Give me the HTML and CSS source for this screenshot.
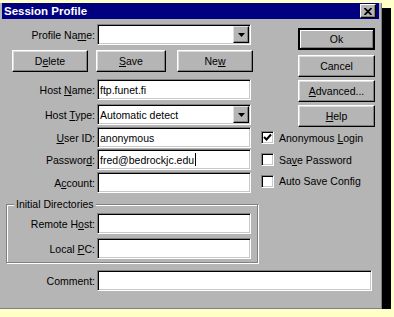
FILE: index.html
```html
<!DOCTYPE html>
<html lang="en">
<head>
  <meta charset="UTF-8" />
  <title>Session Profile</title>
  <link rel="stylesheet" href="styles.css">
</head>
<body>
  <div class="window">
    <div class="titlebar">
      <span class="title">Session Profile</span>
      <span class="close">
        <svg width="8" height="7" viewBox="0 0 8 7"><path d="M0.5 0 L7.5 7 M7.5 0 L0.5 7" stroke="#000" stroke-width="1.8"/></svg>
      </span>
    </div>

    <div class="top">
      <div class="top-left">
        <div class="row row-profile">
          <span class="lbl">Profile Na<u>m</u>e:</span>
          <div class="field">
            <span class="drop"><svg width="7" height="4" viewBox="0 0 7 4"><polygon points="0,0 7,0 3.5,4" fill="#000"/></svg></span>
          </div>
        </div>
        <div class="btnrow">
          <div class="btn btn-delete">D<u>e</u>lete</div>
          <div class="btn btn-save"><u>S</u>ave</div>
          <div class="btn btn-new">Ne<u>w</u></div>
        </div>
        <div class="row row-host">
          <span class="lbl">Host <u>N</u>ame:</span>
          <div class="field">ftp.funet.fi</div>
        </div>
        <div class="row row-type">
          <span class="lbl">Host <u>T</u>ype:</span>
          <div class="field">Automatic detect
            <span class="drop"><svg width="7" height="4" viewBox="0 0 7 4"><polygon points="0,0 7,0 3.5,4" fill="#000"/></svg></span>
          </div>
        </div>
      </div>

      <div class="side">
        <div class="btn btn-side btn-default">Ok</div>
        <div class="btn btn-side btn-cancel">Cancel</div>
        <div class="btn btn-side btn-adv"><u>A</u>dvanced...</div>
        <div class="btn btn-side btn-help"><u>H</u>elp</div>
      </div>
    </div>

    <div class="row row-user">
      <span class="lbl"><u>U</u>ser ID:</span>
      <div class="field">anonymous</div>
      <span class="check"><svg width="9" height="9" viewBox="0 0 9 9"><polyline points="1,4 3.5,6.5 8,1.5" fill="none" stroke="#000" stroke-width="2"/></svg></span>
      <span class="check-text">Anonymous <u>L</u>ogin</span>
    </div>
    <div class="row row-pass">
      <span class="lbl">Passwor<u>d</u>:</span>
      <div class="field">fred@bedrockjc.edu<span class="caret"></span></div>
      <span class="check"></span>
      <span class="check-text">Sa<u>v</u>e Password</span>
    </div>
    <div class="row row-acct">
      <span class="lbl">A<u>c</u>count:</span>
      <div class="field"></div>
      <span class="check"></span>
      <span class="check-text">Auto Save Config</span>
    </div>

    <fieldset class="group">
      <legend>Initial Directories</legend>
      <div class="row row-remote">
        <span class="lbl">Remote H<u>o</u>st:</span>
        <div class="field"></div>
      </div>
      <div class="row row-local">
        <span class="lbl">Local <u>P</u>C:</span>
        <div class="field"></div>
      </div>
    </fieldset>

    <div class="row row-comment">
      <span class="lbl">Comment:</span>
      <div class="field field-wide"></div>
    </div>
  </div>
</body>
</html>
```

FILE: styles.css
```css
body {
  margin: 0;
  background-color: #ffffc8;
  font-family: 'Liberation Sans', Arial, sans-serif;
  font-size: 10.5px;
  color: #000;
}

u {
  text-underline-offset: 1px;
}

.window {
  width: 382px;
  height: 306px;
  box-sizing: border-box;
  background-color: #b5b5b5;
  border-right: 1px solid #808080;
  border-bottom: 1px solid #808080;
  box-shadow: 7px 7px 0 2px #000;
}

.titlebar {
  height: 16px;
  margin: 3px 2px 0;
  padding: 0 3px 0 2px;
  background-color: #000080;
  display: flex;
  align-items: center;
  justify-content: space-between;
}

.title {
  color: #fff;
  font-weight: bold;
  font-size: 11.5px;
}

.close {
  width: 16px;
  height: 14px;
  box-sizing: border-box;
  background-color: #b5b5b5;
  border: 1px solid;
  border-color: #fff #000 #000 #fff;
  box-shadow: inset -1px -1px 0 #808080;
  display: flex;
  align-items: center;
  justify-content: center;
}

/* layout */
.top {
  display: flex;
}

.top-left {
  width: 290px;
}

.side {
  margin-left: 8px;
  display: flex;
  flex-direction: column;
}

.row {
  display: flex;
  align-items: center;
}

.lbl {
  width: 97px;
  padding-right: 2px;
  box-sizing: border-box;
  text-align: right;
  white-space: nowrap;
}

.row-profile { margin-top: 5px; }
.row-host { margin-top: 7px; }
.row-type { margin-top: 4px; }
.row-user { margin-top: 0; }
.row-pass { margin-top: 1px; }
.row-acct { margin-top: 2px; }
.row-local { margin-top: 4px; }
.row-comment { margin-top: 7px; }

/* sunken fields */
.field {
  width: 154px;
  height: 21px;
  box-sizing: border-box;
  padding-left: 2px;
  background-color: #fff;
  border: 1px solid;
  border-color: #808080 #fff #fff #808080;
  box-shadow: inset 1px 1px 0 #000, inset -1px -1px 0 #c8c8c8;
  display: flex;
  align-items: center;
  white-space: nowrap;
}

.field-wide {
  width: 275px;
}

.drop {
  margin-left: auto;
  margin-right: 1px;
  width: 16px;
  height: 17px;
  box-sizing: border-box;
  background-color: #b5b5b5;
  border: 1px solid;
  border-color: #e0e0e0 #000 #000 #e0e0e0;
  box-shadow: inset -1px -1px 0 #808080;
  display: flex;
  align-items: center;
  justify-content: center;
}

.caret {
  display: inline-block;
  width: 1px;
  height: 13px;
  background-color: #000;
  margin-left: 1px;
}

/* raised buttons */
.btn {
  height: 22px;
  box-sizing: border-box;
  border: 1px solid;
  border-color: #fff #000 #000 #fff;
  box-shadow: inset -1px -1px 0 #808080, inset 1px 1px 0 #dcdcdc;
  display: flex;
  align-items: center;
  justify-content: center;
}

.btnrow {
  display: flex;
  margin-top: 5px;
  padding-left: 12px;
}

.btn-delete { width: 76px; }
.btn-save { width: 70px; margin-left: 8px; }
.btn-new { width: 76px; margin-left: 11px; }

.btn-side { width: 77px; }
.btn-default {
  margin-top: 9px;
  border: 2px solid #000;
  box-shadow: inset 1px 1px 0 #fff, inset -1px -1px 0 #808080;
}
.btn-cancel { margin-top: 5px; }
.btn-adv { margin-top: 3px; }
.btn-help { margin-top: 3px; }

/* check boxes */
.check {
  width: 13px;
  height: 13px;
  box-sizing: border-box;
  margin-left: 10px;
  background-color: #fff;
  border: 1px solid;
  border-color: #808080 #fff #fff #808080;
  box-shadow: inset 1px 1px 0 #000, inset -1px -1px 0 #c8c8c8;
  display: flex;
  align-items: center;
  justify-content: center;
}

.check-text {
  margin-left: 5px;
  white-space: nowrap;
}

.row-acct .check,
.row-acct .check-text {
  margin-top: -3px;
}

/* group box */
.group {
  width: 252px;
  box-sizing: border-box;
  margin: 5px 0 0 6px;
  padding: 3px 0 3px 0;
  border: 1px solid #808080;
  box-shadow: 1px 1px 0 #fff, inset 1px 1px 0 #fff;
  min-width: 0;
}

.group legend {
  margin-left: 7px;
  padding: 0 2px;
  line-height: 12px;
  background-color: #b5b5b5;
}

.group .lbl {
  width: 90px;
}
```
